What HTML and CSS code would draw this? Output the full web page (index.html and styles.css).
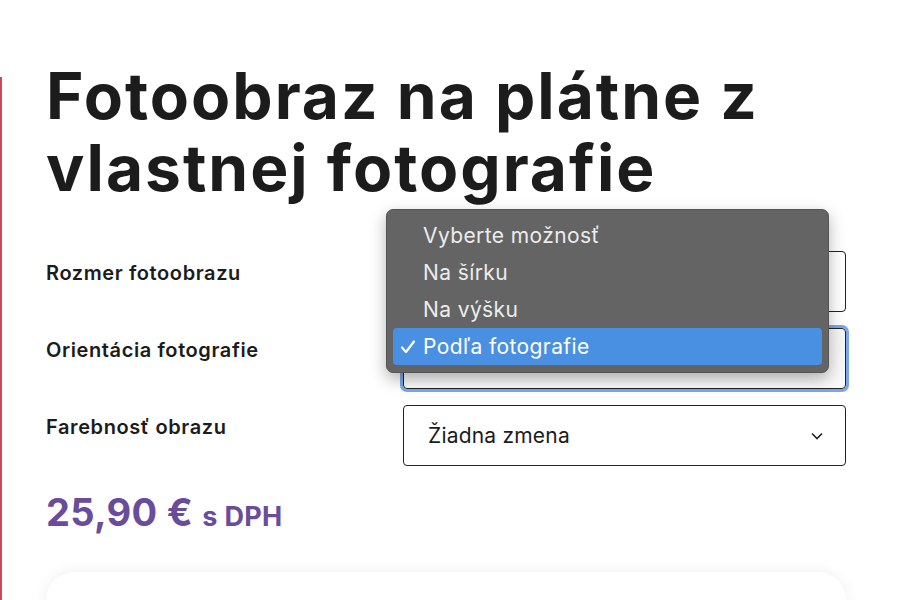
FILE: index.html
```html
<!DOCTYPE html>
<html lang="sk">
<head>
    <meta charset="UTF-8">
    <meta name="viewport" content="width=device-width, initial-scale=1.0">
    <title>Fotoobraz na plátne z vlastnej fotografie</title>
    <link rel="stylesheet" href="styles.css">
</head>
<body>

    <!-- Product detail -->
    <main class="product">
        <h1 class="product-title">Fotoobraz na plátne z vlastnej fotografie</h1>

        <form class="options">
            <div class="option-row">
                <label class="option-label">Rozmer fotoobrazu</label>
                <div class="select">
                    <span class="select-value"></span>
                    <svg class="chevron" viewBox="0 0 12 8" width="12" height="8"><path d="M1 1.5 6 6.5 11 1.5"/></svg>
                </div>
            </div>

            <div class="option-row">
                <label class="option-label">Orientácia fotografie</label>
                <div class="select select-focus">
                    <span class="select-value"></span>
                    <svg class="chevron" viewBox="0 0 12 8" width="12" height="8"><path d="M1 1.5 6 6.5 11 1.5"/></svg>

                    <!-- Open native dropdown -->
                    <ul class="dropdown">
                        <li>Vyberte možnosť</li>
                        <li>Na šírku</li>
                        <li>Na výšku</li>
                        <li class="selected">
                            <svg class="check" viewBox="0 0 16 16" width="16" height="16"><path d="M2 8.5 6 13 14 2.5"/></svg>
                            Podľa fotografie
                        </li>
                    </ul>
                </div>
            </div>

            <div class="option-row">
                <label class="option-label">Farebnosť obrazu</label>
                <div class="select">
                    <span class="select-value">Žiadna zmena</span>
                    <svg class="chevron" viewBox="0 0 12 8" width="12" height="8"><path d="M1 1.5 6 6.5 11 1.5"/></svg>
                </div>
            </div>
        </form>

        <p class="price">25,90 € <span class="price-vat">s DPH</span></p>

        <!-- Cart box -->
        <div class="cart-box"></div>
    </main>

</body>
</html>
```

FILE: styles.css
```css
/* Global Styles */
body {
    font-family: Inter, "Noto Sans", Arial, sans-serif;
    background-color: #fff;
    color: #1c1c1c;
    margin: 0;
    overflow: hidden;
}

.product {
    position: relative;
    padding: 60px 61px 0 46px;
    min-height: 600px;
    box-sizing: border-box;
}

/* red accent line on the left edge */
.product::before {
    content: "";
    position: absolute;
    left: 0;
    top: 77px;
    bottom: 0;
    width: 2px;
    background-color: #c94a5c;
}

.product-title {
    font-size: 64px;
    line-height: 72px;
    font-weight: 700;
    letter-spacing: 2px;
    margin: 0 0 47px 0;
}

/* Option rows */
.options {
    display: flex;
    flex-direction: column;
    gap: 16px;
}

.option-row {
    display: grid;
    grid-template-columns: 357px 1fr;
    align-items: start;
}

.option-label {
    font-size: 20px;
    font-weight: 600;
    letter-spacing: 0.6px;
    line-height: 24px;
    padding-top: 10px;
}

.select {
    position: relative;
    height: 61px;
    border: 1.5px solid #222;
    border-radius: 4px;
    box-sizing: border-box;
    display: flex;
    align-items: center;
    justify-content: space-between;
    padding: 0 22px 0 24px;
    font-size: 21px;
    letter-spacing: 0.2px;
    color: #1c1c1c;
}

.select-focus {
    box-shadow: 0 0 0 3px #79a6ec;
    background: linear-gradient(#f4f4f4, #fafafa);
}

.chevron {
    fill: none;
    stroke: #222;
    stroke-width: 1.6;
}

/* Native looking dropdown */
.dropdown {
    position: absolute;
    left: -18px;
    top: -120px;
    width: 443px;
    margin: 0;
    padding: 7px 6px;
    list-style: none;
    background-color: #646464;
    border: 1px solid #555;
    border-radius: 7px;
    box-shadow: 0 6px 16px rgba(0, 0, 0, 0.3);
    box-sizing: border-box;
    font-size: 21px;
    letter-spacing: 0.4px;
    color: #ececec;
    z-index: 2;
}

.dropdown li {
    height: 37px;
    line-height: 37px;
    padding-left: 30px;
    border-radius: 4px;
    position: relative;
}

.dropdown .selected {
    background-color: #4a90e2;
    color: #fff;
}

.check {
    position: absolute;
    left: 7px;
    top: 11px;
    fill: none;
    stroke: #fff;
    stroke-width: 2.2;
    stroke-linecap: round;
    stroke-linejoin: round;
}

/* Price */
.price {
    margin: 23px 0 0 0;
    font-size: 38px;
    font-weight: 700;
    color: #6a4c9c;
    letter-spacing: 0.3px;
}

.price-vat {
    font-size: 27px;
}

.cart-box {
    margin-top: 37px;
    height: 200px;
    background-color: #fff;
    border-radius: 28px;
    box-shadow: 0 0 14px rgba(0, 0, 0, 0.07);
}
```
